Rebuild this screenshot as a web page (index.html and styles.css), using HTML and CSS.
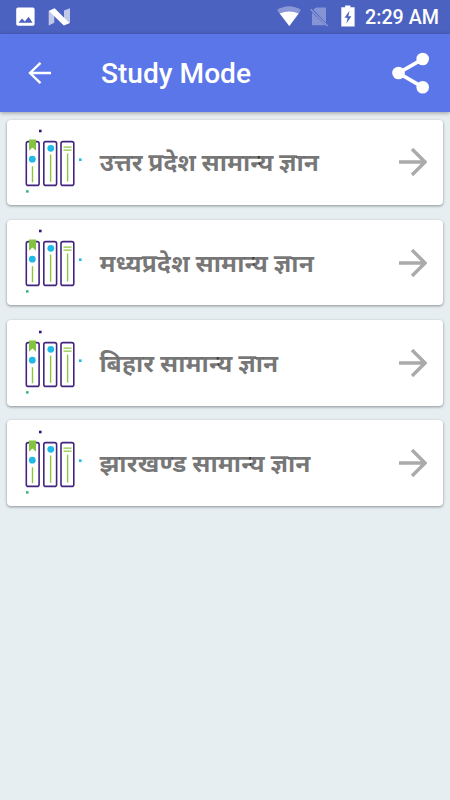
FILE: index.html
```html
<!DOCTYPE html>
<html lang="hi">
<head>
	<meta charset="UTF-8">
	<title>Study Mode</title>
	<link rel="stylesheet" href="styles.css">
</head>
<body>
<svg class="defs" width="0" height="0">
	<symbol id="books" viewBox="0 0 62 66">
		<g fill="#fff" stroke="#43247f" stroke-width="1.6">
			<rect x="4.3" y="13.6" width="12.8" height="43.8" rx="2"/>
			<rect x="21.8" y="13.6" width="12.8" height="43.8" rx="2"/>
			<rect x="39" y="13.6" width="12.8" height="43.8" rx="2"/>
		</g>
		<path d="M7 11.5h7v11.2l-3.5-3.2L7 22.7z" fill="#83c341"/>
		<path d="M10.5 38.2v16M28.6 26.4v27.3M45.6 25.4v28M41.5 19.1h8M41.5 22.1h8" stroke="#8cc63f" stroke-width="1.4" fill="none"/>
		<circle cx="10.3" cy="31.2" r="3.4" fill="#21b9e6"/>
		<circle cx="28.8" cy="20.3" r="3.4" fill="#21b9e6"/>
		<path d="M17 1.7h2.6v2.6H17z" fill="#36147c"/>
		<path d="M57 30.4h2.6V33H57z" fill="#21b9e6"/>
		<path d="M4.1 62.2h2.4v2.4H4.1z" fill="#22ad69"/>
	</symbol>
	<symbol id="arrow" viewBox="0 0 28 28">
		<path d="M0 14h26M13 1l13 13-13 13" fill="none" stroke="#aaa" stroke-width="3.4"/>
	</symbol>
</svg>
<div id="status">
	<svg class="left" width="64" height="34" viewBox="0 0 64 34">
		<rect x="6.2" y="7.6" width="18.4" height="18.2" rx="1.8" fill="#fff"/>
		<path d="M8.5 22.8l3.5-4.2 2.8 3 3.8-4.8 4 6z" fill="#4c62c0"/>
		<path d="M38.7 11l5.6-2.6v14.3l-5.6 2.7zM54 10.5l6-2.3v14.8l-6 2.3z" fill="#fff" opacity=".65"/>
		<path d="M39 11l5.6-2.7L59.4 23l-5.6 2.4z" fill="#fff"/>
	</svg>
	<svg class="right" width="86" height="34" viewBox="0 0 86 34">
		<path d="M7 10Q19 2.5 31 10L19.3 26z" fill="#fff" opacity=".35"/>
		<path d="M9.7 13.5q9.5-4 19 0L19.3 26z" fill="#fff"/>
		<path d="M46.5 7.5H56v15.3L43.2 9.6zM42 12.4l13.5 12.9H42z" fill="#fff" opacity=".32"/>
		<path d="M40.6 9.3l17 16.7" stroke="#fff" stroke-width="1.3" opacity=".35"/>
		<path d="M71.3 7.3h3.8V5.6h5.3v1.7h4.2v19.2H71.3z" fill="#fff"/>
		<path d="M79.5 10.8l-5 7h3.1l-1.2 5.8 5-7.3h-3z" fill="#4c62c0"/>
	</svg>
	<span class="time">2:29 AM</span>
</div>
<div id="header">
	<svg class="back" width="24" height="24" viewBox="0 0 24 24">
		<path d="M23 12H2M12.5 1.8L2 12l10.5 10.2" fill="none" stroke="#fff" stroke-width="2.4"/>
	</svg>
	<h1>Study Mode</h1>
	<svg class="share" width="40" height="44" viewBox="0 0 40 44">
		<path d="M32.7 8.2L8.5 22l24.2 14.2" fill="none" stroke="#fff" stroke-width="3.7"/>
		<g fill="#fff">
			<circle cx="32.7" cy="8" r="6.3"/>
			<circle cx="8.5" cy="22" r="6.3"/>
			<circle cx="32.7" cy="36.2" r="6.3"/>
		</g>
	</svg>
</div>
<ul id="list">
	<li>
		<svg class="books"><use href="#books"/></svg>
		<span class="name">उत्तर प्रदेश सामान्य ज्ञान</span>
		<svg class="arrow"><use href="#arrow"/></svg>
	</li>
	<li>
		<svg class="books"><use href="#books"/></svg>
		<span class="name wide">मध्यप्रदेश सामान्य ज्ञान</span>
		<svg class="arrow"><use href="#arrow"/></svg>
	</li>
	<li>
		<svg class="books"><use href="#books"/></svg>
		<span class="name wide">बिहार सामान्य ज्ञान</span>
		<svg class="arrow"><use href="#arrow"/></svg>
	</li>
	<li>
		<svg class="books"><use href="#books"/></svg>
		<span class="name wide">झारखण्ड सामान्य ज्ञान</span>
		<svg class="arrow"><use href="#arrow"/></svg>
	</li>
</ul>
</body>
</html>
```
FILE: styles.css
```css
*{margin: 0;padding: 0;box-sizing: border-box;}
ul{list-style: none;}
body{
	height: 800px;
	background: #e6eef2;
	font-family: Roboto, "Noto Sans", sans-serif;
	overflow: hidden;
}
svg{
	display: block;
	flex: none;
}
.defs{
	height: 0;
}
#status{
	height: 34px;
	padding: 0 10px;
	display: flex;
	align-items: center;
	background: #4c62c0;
	color: #fff;
}
#status .right{
	margin-left: auto;
}
.time{
	width: 75px;
	margin-left: 9px;
	padding-top: 2px;
	font-size: 19.7px;
	font-weight: 500;
	line-height: 32px;
	white-space: nowrap;
}
#header{
	height: 78px;
	padding: 0 20px 0 28px;
	display: flex;
	align-items: center;
	background: #5b76e8;
	color: #fff;
	box-shadow: 0 1px 4px rgba(0,0,0,.35);
}
#header h1{
	margin-left: 49px;
	padding-top: 2px;
	font-size: 28.1px;
	font-weight: 500;
	line-height: 36px;
}
.share{
	margin-left: auto;
}
#list{
	padding: 7.6px 7px;
	display: flex;
	flex-direction: column;
	gap: 14.8px;
}
#list li{
	height: 85.5px;
	padding: 0 16px 0 15px;
	display: flex;
	align-items: center;
	background: #fff;
	border-radius: 4px;
	box-shadow: 0 1px 3px rgba(0,0,0,.4);
}
.books{
	width: 62px;
	height: 66px;
	margin-bottom: 2.8px;
}
.name{
	margin-left: 15.4px;
	font: bold 24.6px/40px "Noto Sans", "Noto Sans Devanagari", sans-serif;
	word-spacing: -.8px;
	color: rgba(0,0,0,.54);
	white-space: nowrap;
}
.wide{
	letter-spacing: .15px;
}
.arrow{
	width: 28px;
	height: 28px;
	margin-left: auto;
}
```
